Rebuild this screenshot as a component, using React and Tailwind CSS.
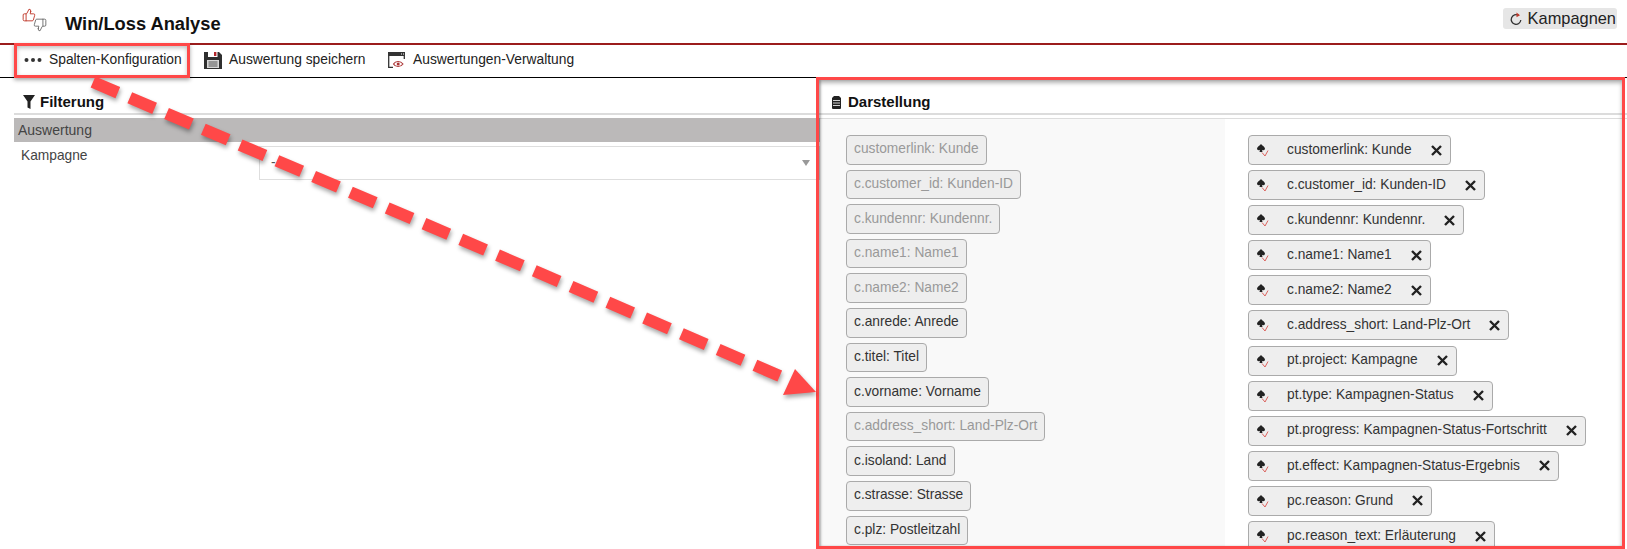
import React from "react";
import { ThumbsUp, ThumbsDown } from "lucide-react";

const F = "font-['Liberation_Sans',Arial,sans-serif]";

const left = [
  ["customerlink: Kunde", 1], ["c.customer_id: Kunden-ID", 1], ["c.kundennr: Kundennr.", 1], ["c.name1: Name1", 1], ["c.name2: Name2", 1],
  ["c.anrede: Anrede", 0], ["c.titel: Titel", 0], ["c.vorname: Vorname", 0], ["c.address_short: Land-Plz-Ort", 1],
  ["c.isoland: Land", 0], ["c.strasse: Strasse", 0], ["c.plz: Postleitzahl", 0],
];
const right = [
  "customerlink: Kunde", "c.customer_id: Kunden-ID", "c.kundennr: Kundennr.", "c.name1: Name1", "c.name2: Name2",
  "c.address_short: Land-Plz-Ort", "pt.project: Kampagne", "pt.type: Kampagnen-Status",
  "pt.progress: Kampagnen-Status-Fortschritt", "pt.effect: Kampagnen-Status-Ergebnis", "pc.reason: Grund", "pc.reason_text: Erläuterung",
];

function Thumbs() {
  return (
    <div className="flex w-[25px] shrink-0 items-start">
      <ThumbsUp size={14} strokeWidth={1.6} color="#c0392b" className="mt-[-3px] shrink-0" />
      <ThumbsDown size={14} strokeWidth={1.5} color="#666" className="ml-[-3px] mt-[7px] shrink-0" />
    </div>
  );
}

function Dots() {
  return (
    <svg width="18" height="6" viewBox="0 0 18 6" className="shrink-0">
      <circle cx="2.5" cy="3" r="2" fill="#333" /><circle cx="9" cy="3" r="2" fill="#333" /><circle cx="15.5" cy="3" r="2" fill="#333" />
    </svg>
  );
}

function Floppy() {
  return (
    <svg width="18" height="18" viewBox="0 0 18 18" className="shrink-0">
      <path d="M0 1h15l3 3v14H0Z" fill="#2f2f2f" />
      <rect x="4" y="0" width="9.500" height="6" fill="#fff" />
      <rect x="10" y="1" width="2.400" height="4" fill="#b3262b" />
      <rect x="3" y="9" width="12" height="8" fill="#d6d6d6" />
      <path d="M4.500 11h9M4.500 13h9M4.500 15h9" stroke="#555" strokeWidth="1" />
    </svg>
  );
}

function WindowEye() {
  return (
    <svg width="18" height="17" viewBox="0 0 18 17" fill="none" className="shrink-0">
      <rect x="0" y="0" width="17" height="4" fill="#333" />
      <path d="M13 2h1M15 2h1" stroke="#fff" />
      <path d="M.7 4v11.300H5M16.300 4v3" stroke="#333" strokeWidth="1.300" />
      <path d="M5.500 12c2-3.400 7-3.400 9.500 0-2.500 3.400-7.500 3.400-9.500 0Z" stroke="#a33" strokeWidth="1.100" />
      <circle cx="10.200" cy="12" r="1.500" fill="#a33" />
    </svg>
  );
}

function Funnel() {
  return (
    <svg width="12" height="14" viewBox="0 0 12 14" className="shrink-0">
      <path d="M0 0h12L7.500 6.500V14l-3-1.500v-6Z" fill="#222" />
    </svg>
  );
}

function Doc() {
  return (
    <svg width="9" height="13" viewBox="0 0 9 13" className="shrink-0">
      <path d="M2 0h5l2 2v10a1 1 0 0 1-1 1H1a1 1 0 0 1-1-1V2Z" fill="#222" />
      <path d="M1 4.500h7M1 7h7M1 9.500h7" stroke="#fff" strokeWidth=".8" />
    </svg>
  );
}

function Refresh() {
  return (
    <svg width="12" height="14" viewBox="0 0 12 14" fill="none" className="shrink-0">
      <path d="M8.500 3.400A4.800 4.800 0 1 0 10.800 8" stroke="#333" strokeWidth="1.300" />
      <path d="M6.500 .6 10 3.200 6.500 5.200Z" fill="#c0392b" />
    </svg>
  );
}

function ChipIcon() {
  return (
    <svg width="12" height="16" viewBox="0 0 12 16" fill="none" className="shrink-0">
      <path d="M4 2C5.300 3.800 8 4.800 8 6.800c0 1.500-2 1.800-3.100 .9l.6 2.300H2.500l.6-2.300C2 8.600 0 8.300 0 6.800 0 4.800 2.700 3.800 4 2Z" fill="#222" />
      <path d="M5 10.500 8 14 11 8.500" stroke="#d9534f" strokeWidth=".9" />
    </svg>
  );
}

function Close() {
  return (
    <svg width="11" height="11" viewBox="0 0 11 11" className="shrink-0">
      <path d="M1 1 10 10M10 1 1 10" stroke="#222" strokeWidth="2.400" />
    </svg>
  );
}

function ToolItem({ icon, text, className }) {
  return (
    <div className={"flex items-center " + className}>
      {icon}
      <span className="text-[13.8px] text-[#222]">{text}</span>
    </div>
  );
}

export default function App() {
  return (
    <div className={"relative h-[549px] w-[1627px] overflow-hidden bg-white text-[13.75px] text-[#333] " + F}>
      {/* Header */}
      <header className="flex h-[43px] items-center pl-[22px] pr-[10px]">
        <Thumbs />
        <h1 className="ml-[18px] mt-[5px] text-[18.300px] font-bold text-[#111]">Win/Loss Analyse</h1>
        <div className="ml-auto mt-[-6px] flex h-[21px] items-center gap-[6px] rounded-[3px] bg-[#e6e6e6] pl-[7px] pr-[1px] text-[16.400px] text-[#222]">
          <Refresh />
          <span>Kampagnen</span>
        </div>
      </header>

      {/* Toolbar */}
      <nav className="flex h-[35px] items-center border-t-2 border-b border-t-[#9b1c1c] border-b-black pb-[2px] pl-[24px]">
        <ToolItem icon={<Dots />} text="Spalten-Konfiguration" className="w-[180px] gap-[7px]" />
        <ToolItem icon={<Floppy />} text="Auswertung speichern" className="w-[184px] gap-[7px]" />
        <ToolItem icon={<WindowEye />} text="Auswertungen-Verwaltung" className="gap-[7px]" />
      </nav>

      {/* Body */}
      <div className="flex pl-[14px]">
        <section className="w-[806px] shrink-0">
          <div className="flex h-[37px] items-center gap-[5px] border-b-2 border-[#dcdcdc] pl-[9px] pt-[13px]">
            <Funnel />
            <span className="text-[15px] font-bold text-[#111]">Filterung</span>
          </div>
          <div className="mt-[3px] flex h-[24px] items-center bg-[#bbb9b9] pl-[4px] text-[14px] text-[#444]">Auswertung</div>
          <div className="flex">
            <div className="w-[245px] pl-[7px] pt-[4px] text-[#444]">Kampagne</div>
            <div className="mt-[4px] flex h-[34px] flex-1 items-center justify-between border border-[#dedede] pl-[11px] pr-[9px]">
              <span className="text-[#555]">-</span>
              <span className="h-0 w-0 border-x-[4px] border-t-[6px] border-x-transparent border-t-[#999]" />
            </div>
          </div>
        </section>

        <section className="min-w-0 flex-1">
          <div className="flex h-[37px] items-center gap-[7px] border-b-2 border-[#dcdcdc] pl-[12px] pt-[13px]">
            <Doc />
            <span className="text-[15px] font-bold text-[#111]">Darstellung</span>
          </div>
          <div className="mt-[3px] flex border-t border-[#dcdcdc]">
            <div className="w-[405px] shrink-0 bg-[#f9f9f9] pl-[26px] pt-[16px]">
              {left.map(([t, off]) => (
                <div key={t} className={"mb-[5px] flex h-[29.6px] w-fit items-center rounded-[4px] border border-[#aaa] bg-[#eee] px-[7px] " + (off ? "text-[#999]" : "text-[#333]")}>
                  {t}
                </div>
              ))}
            </div>
            <div className="flex-1 pl-[23px] pt-[16px]">
              {right.map((t) => (
                <div key={t} className="mb-[5.1px] flex h-[30px] w-fit items-center rounded-[4px] border border-[#aaa] bg-[#eee] pl-[8px] pr-[8px] text-[#333]">
                  <ChipIcon />
                  <span className="ml-[18px] mr-[19px]">{t}</span>
                  <Close />
                </div>
              ))}
            </div>
          </div>
        </section>
      </div>

      {/* Annotation overlay */}
      <div className="pointer-events-none absolute left-[14px] top-[43px] h-[35px] w-[176px] border-[3px] border-[#ff4848] shadow-[0_2px_4px_rgba(0,0,0,0.35),inset_0_2px_4px_rgba(0,0,0,0.25)]" />
      <div className="pointer-events-none absolute left-[816px] top-[77px] h-[472px] w-[809px] border-[3px] border-[#ff4848] shadow-[inset_0_3px_4px_rgba(0,0,0,0.3),inset_2px_0_2px_rgba(0,0,0,0.2)]" />
      <svg width="1627" height="549" viewBox="0 0 1627 549" className="pointer-events-none absolute left-0 top-0 drop-shadow-[1px_3px_2px_rgba(0,0,0,0.35)]" fill="none">
        <path d="M93 82 780 376" stroke="#ff4848" strokeWidth="12" strokeDasharray="27 13" />
        <path d="M795 369 816 392 783 395Z" fill="#ff4848" />
      </svg>
    </div>
  );
}
